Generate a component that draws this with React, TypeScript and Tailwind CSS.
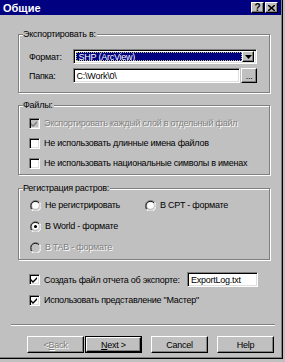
import type { ReactNode } from "react"

const raised =
  "border border-t-white border-l-white border-b-black border-r-black shadow-[inset_-1px_-1px_0_#808080]"
const sunken =
  "border border-t-[#808080] border-l-[#808080] border-b-white border-r-white shadow-[inset_1px_1px_0_#000,inset_-1px_-1px_0_#dfdfdf]"
const disabledText = "text-[#808080] [text-shadow:1px_1px_0_#fff]"

function Group({ label, className, children }: { label: string; className: string; children: ReactNode }) {
  return (
    <div
      className={`relative w-[252px] border border-[#808080] shadow-[1px_1px_0_#fff,inset_1px_1px_0_#fff] ${className}`}
    >
      <span className="absolute left-[4px] top-[-7px] bg-[#c0c0c0] pr-[1px] leading-[12px]">{label}</span>
      {children}
    </div>
  )
}

function Check({ checked, disabled, label }: { checked?: boolean; disabled?: boolean; label: string }) {
  return (
    <div className="flex items-center h-[14px]">
      <div
        className={`w-[11px] h-[11px] shrink-0 flex items-center justify-center ${sunken} ${
          disabled ? "bg-[#c0c0c0]" : "bg-white"
        }`}
      >
        {checked && (
          <svg width="7" height="7" viewBox="0 0 7 7">
            <path d="M0 3 L2 5 L6 1 L6 3 L2 7 L0 5 Z" fill={disabled ? "#808080" : "#000"} />
          </svg>
        )}
      </div>
      <span className={`ml-[4px] ${disabled ? disabledText : ""}`}>{label}</span>
    </div>
  )
}

function Radio({ checked, disabled, label }: { checked?: boolean; disabled?: boolean; label: string }) {
  return (
    <div className="flex items-center h-[14px]">
      <svg width="11" height="11" viewBox="0 0 12 12" className="shrink-0">
        <path d="M10.5 2.5 A5.5 5.5 0 0 0 1.5 10.5" stroke="#808080" fill="none" />
        <path d="M9.8 3.2 A4.5 4.5 0 0 0 2.2 9.8" stroke="#000" fill="none" />
        <path d="M1.5 10.5 A5.5 5.5 0 0 0 10.5 2.5" stroke="#fff" fill="none" />
        <path d="M2.2 9.8 A4.5 4.5 0 0 0 9.8 3.2" stroke="#dfdfdf" fill="none" />
        <circle cx="6" cy="6" r="3.6" fill={disabled ? "#c0c0c0" : "#fff"} />
        {checked && <circle cx="6" cy="6" r="1.7" fill="#000" />}
      </svg>
      <span className={`ml-[4px] ${disabled ? disabledText : ""}`}>{label}</span>
    </div>
  )
}

function Button({ children, def, disabled, className }: { children: ReactNode; def?: boolean; disabled?: boolean; className?: string }) {
  return (
    <div className={`w-[57px] h-[17px] ${def ? "border border-black" : ""} ${className ?? ""}`}>
      <div
        className={`w-full h-full flex items-center justify-center bg-[#c0c0c0] ${raised} ${
          disabled ? disabledText : ""
        }`}
      >
        {children}
      </div>
    </div>
  )
}

export default function App() {
  return (
    <div
      className="w-[285px] h-[362px] bg-[#c0c0c0] text-[9px] tracking-[-0.25px] text-black leading-[12px] whitespace-nowrap"
      style={{ fontFamily: '"Liberation Sans", Arial, sans-serif' }}
    >
      <div className="w-[283px] h-[359px] flex flex-col border-r border-b border-black shadow-[inset_-1px_-1px_0_#808080]">
        {/* Title bar */}
        <div className="h-[15px] bg-[#000080] flex items-center pl-[3px] pr-[3px] mr-[1px]">
          <span className="text-white font-bold text-[11px] tracking-normal flex-1">Общие</span>
          <div className={`w-[13px] h-[11px] bg-[#c0c0c0] ${raised} flex items-center justify-center font-bold text-[10px] leading-none`}>
            ?
          </div>
          <div className={`ml-[1px] w-[13px] h-[11px] bg-[#c0c0c0] ${raised} flex items-center justify-center`}>
            <svg width="7" height="6" viewBox="0 0 7 6">
              <path d="M0 0 L7 6 M7 0 L0 6" stroke="#000" strokeWidth="1.5" />
            </svg>
          </div>
        </div>

        <div className="flex flex-col pl-[18px]">
          {/* Export to */}
          <Group label="Экспортировать в:" className="mt-[19px] h-[59px] pl-[10px] pr-[12px] pt-[14px]">
            <div className="flex items-center">
              <span className="w-[44px]">Формат:</span>
              <div className={`w-[186px] h-[15px] bg-white flex items-center p-[2px] ${sunken}`}>
                <div className="flex-1 h-full bg-[#000080] text-white flex items-center pl-[2px] border border-dotted border-[#c0c080]">
                  SHP (ArcView)
                </div>
                <div className={`w-[12px] h-[11px] bg-[#c0c0c0] ${raised} flex items-center justify-center`}>
                  <svg width="7" height="4" viewBox="0 0 7 4">
                    <path d="M0 0 H7 L3.5 4 Z" fill="#000" />
                  </svg>
                </div>
              </div>
            </div>
            <div className="flex items-center mt-[4px]">
              <span className="w-[44px]">Папка:</span>
              <div className={`w-[169px] h-[15px] bg-white flex items-center pl-[3px] ${sunken}`}>C:\Work\0\</div>
              <div className={`ml-[1px] w-[16px] h-[15px] bg-[#c0c0c0] ${raised} flex items-center justify-center text-[9px]`}>
                ...
              </div>
            </div>
          </Group>

          {/* Files */}
          <Group label="Файлы:" className="mt-[12px] h-[70px] pl-[10px] pt-[10px] flex flex-col gap-[6px]">
            <Check checked disabled label="Экспортировать каждый слой в отдельный файл" />
            <Check label="Не использовать длинные имена файлов" />
            <Check label="Не использовать национальные символы в именах" />
          </Group>

          {/* Raster registration */}
          <Group label="Регистрация растров:" className="mt-[13px] h-[72px] pl-[11px] pt-[9px]">
            <div className="grid grid-cols-[115px_1fr] gap-y-[7px]">
              <Radio label="Не регистрировать" />
              <Radio label="В CPT - формате" />
              <Radio checked label="В World - формате" />
              <div />
              <Radio disabled label="В TAB - формате" />
            </div>
          </Group>

          <div className="mt-[12px] pl-[11px] flex items-center">
            <div className="w-[158px]">
              <Check checked label="Создать файл отчета об экспорте:" />
            </div>
            <div className={`w-[71px] h-[15px] bg-white flex items-center pl-[3px] ${sunken}`}>ExportLog.txt</div>
          </div>
          <div className="mt-[6px] pl-[11px]">
            <Check checked label='Использовать представление "Мастер"' />
          </div>
        </div>

        {/* Separator */}
        <div className="mt-[17px] ml-[11px] w-[264px] h-[2px] border-t border-[#808080] border-b border-b-white" />

        {/* Buttons */}
        <div className="mt-[10px] pl-[27px] flex">
          <Button disabled>
            &lt; <span className="underline">B</span>ack
          </Button>
          <Button def className="ml-[1px]">
            <span className="underline">N</span>ext &gt;
          </Button>
          <Button className="ml-[9px]">Cancel</Button>
          <Button className="ml-[9px]">Help</Button>
        </div>
      </div>
    </div>
  )
}
